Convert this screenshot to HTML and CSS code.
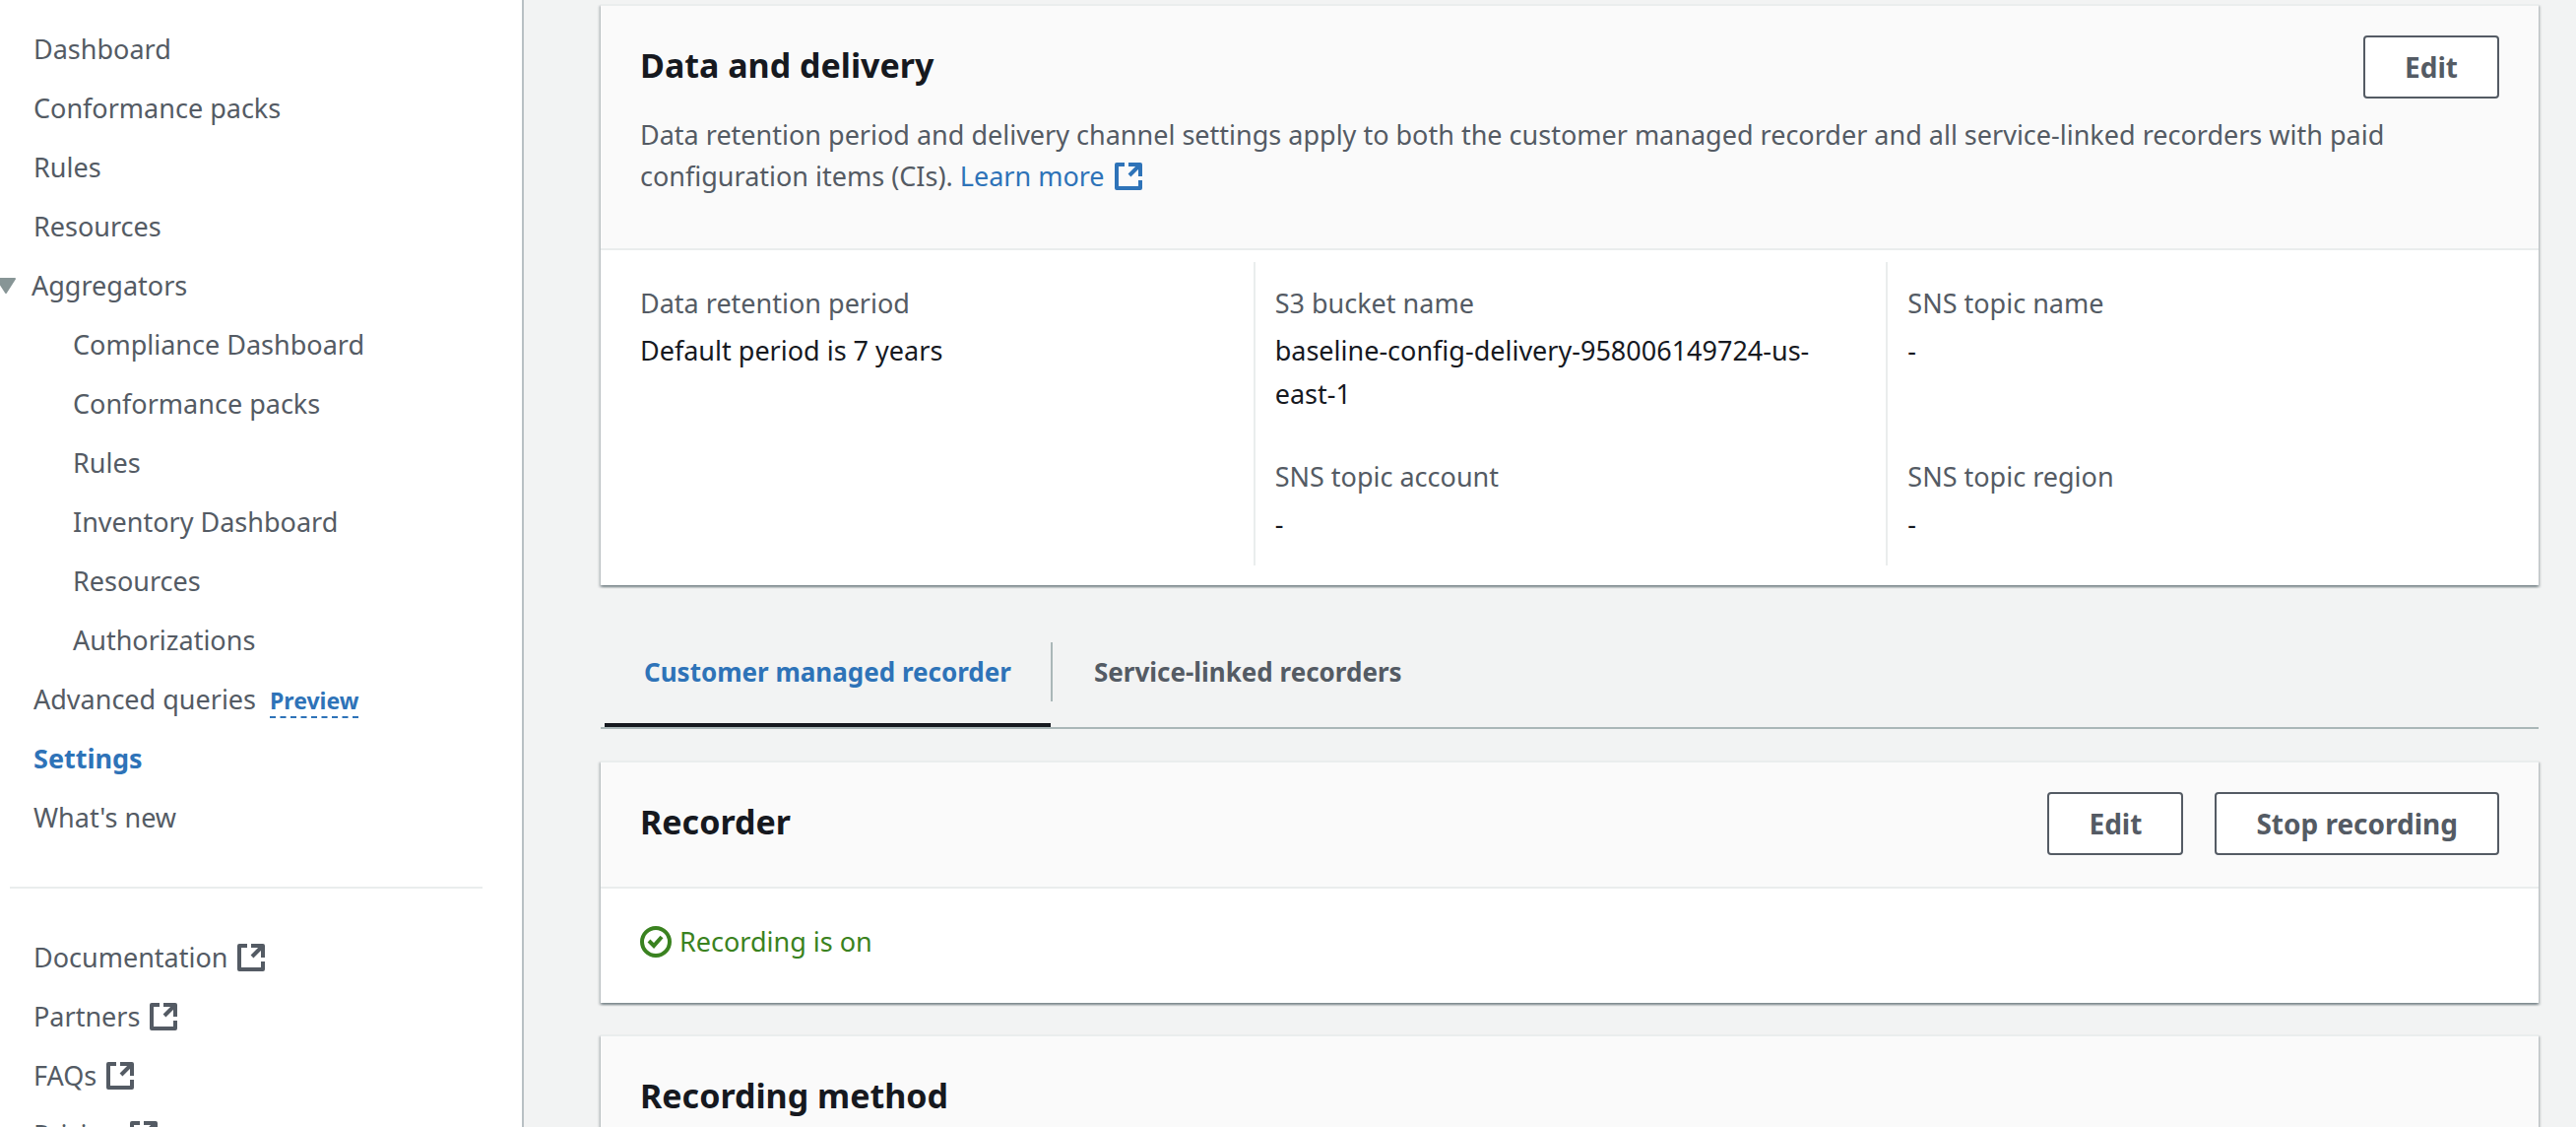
FILE: index.html
```html
<!DOCTYPE html>
<html lang="en">
<head>
<meta charset="utf-8">
<title>AWS Config - Settings</title>
<link rel="stylesheet" href="styles.css">
</head>
<body>
<svg class="sprite" aria-hidden="true">
  <symbol id="external" viewBox="0 0 32 32">
    <path d="M12 4H4v24h24v-8M16 4h12v12M28 4L17 15" fill="none" stroke="currentColor" stroke-width="4" stroke-linejoin="round"/>
  </symbol>
</svg>
<div class="layout">
  <nav class="sidebar" aria-label="AWS Config">
    <ul class="nav">
      <li><a href="#">Dashboard</a></li>
      <li><a href="#">Conformance packs</a></li>
      <li><a href="#">Rules</a></li>
      <li><a href="#">Resources</a></li>
      <li class="group">
        <button class="toggle" type="button" aria-expanded="true" aria-label="Collapse Aggregators"><svg viewBox="0 0 24 20"><path d="M3 3h18l-9 14z" fill="currentColor" stroke="currentColor" stroke-width="2" stroke-linejoin="round"/></svg></button>
        <a href="#">Aggregators</a>
      </li>
      <li>
        <ul class="nav nested">
          <li><a href="#">Compliance Dashboard</a></li>
          <li><a href="#">Conformance packs</a></li>
          <li><a href="#">Rules</a></li>
          <li><a href="#">Inventory Dashboard</a></li>
          <li><a href="#">Resources</a></li>
          <li><a href="#">Authorizations</a></li>
        </ul>
      </li>
      <li><a href="#">Advanced queries</a><button class="preview" type="button">Preview</button></li>
      <li><a class="current" href="#" aria-current="page">Settings</a></li>
      <li><a href="#">What's new</a></li>
    </ul>
    <hr class="rule">
    <ul class="nav">
      <li><a href="#">Documentation<svg class="ext"><use href="#external"/></svg></a></li>
      <li><a href="#">Partners<svg class="ext"><use href="#external"/></svg></a></li>
      <li><a href="#">FAQs<svg class="ext"><use href="#external"/></svg></a></li>
      <li><a href="#">Pricing<svg class="ext"><use href="#external"/></svg></a></li>
    </ul>
  </nav>
  <main class="content">
    <section class="card">
      <header class="card-header described">
        <div class="card-title">
          <h2>Data and delivery</h2>
          <button class="btn" type="button">Edit</button>
        </div>
        <p>Data retention period and delivery channel settings apply to both the customer managed recorder and all service-linked recorders with paid configuration items (CIs). <a href="#">Learn more<svg class="ext"><use href="#external"/></svg></a></p>
      </header>
      <div class="columns">
        <dl>
          <div class="cell"><dt>Data retention period</dt><dd>Default period is 7 years</dd></div>
        </dl>
        <dl class="wide">
          <div class="cell"><dt>S3 bucket name</dt><dd>baseline-config-delivery-958006149724-us-east-1</dd></div>
          <div class="cell"><dt>SNS topic name</dt><dd>-</dd></div>
          <div class="cell"><dt>SNS topic account</dt><dd>-</dd></div>
          <div class="cell"><dt>SNS topic region</dt><dd>-</dd></div>
        </dl>
      </div>
    </section>
    <div class="tabs" role="tablist">
      <button class="tab active" type="button" role="tab" aria-selected="true">Customer managed recorder</button>
      <button class="tab" type="button" role="tab" aria-selected="false">Service-linked recorders</button>
    </div>
    <section class="card">
      <header class="card-header">
        <div class="card-title">
          <h2>Recorder</h2>
          <button class="btn" type="button">Edit</button>
          <button class="btn" type="button">Stop recording</button>
        </div>
      </header>
      <div class="card-body">
        <p class="status"><svg viewBox="0 0 32 32"><circle cx="16" cy="16" r="14" fill="none" stroke="currentColor" stroke-width="4"/><path d="M9 15l5 5 8-9" fill="none" stroke="currentColor" stroke-width="4"/></svg>Recording is on</p>
      </div>
    </section>
    <section class="card">
      <header class="card-header">
        <div class="card-title">
          <h2>Recording method</h2>
        </div>
      </header>
    </section>
  </main>
</div>
</body>
</html>
```
FILE: styles.css
```css
* {
  box-sizing: border-box;
}

html {
  scrollbar-width: none;
}

body {
  margin: 0;
  background: #f2f3f3;
  color: #16191f;
  font: 27px/44px "Noto Sans", "Open Sans", sans-serif;
}

ul, dl, dd, p, h2 {
  margin: 0;
  padding: 0;
}

ul {
  list-style: none;
}

a {
  color: inherit;
  text-decoration: none;
}

button {
  font: inherit;
  color: inherit;
  background: none;
  border: 0;
  padding: 0;
}

.sprite {
  display: none;
}

.layout {
  display: flex;
  min-height: 100vh;
}

.sidebar {
  flex: 0 0 532px;
  padding-top: 20px;
  background: #fff;
  border-right: 2px solid #b8c0c4;
  color: #545b64;
}

.nav {
  padding-left: 34px;
}

.nav li {
  line-height: 60px;
}

.nav .nested {
  padding-left: 40px;
}

.group {
  display: flex;
  margin-left: -40px;
}

.toggle {
  display: flex;
  align-items: center;
  width: 38px;
  color: #879596;
}

.toggle svg {
  width: 24px;
  height: 20px;
}

.preview {
  margin-left: 14px;
  border-bottom: 2px dashed #2e73b8;
  color: #2e73b8;
  font-size: 23px;
  font-weight: 700;
  line-height: 32px;
}

.nav .current {
  color: #2e73b8;
  font-weight: 700;
}

.rule {
  height: 2px;
  margin: 40px 40px 40px 10px;
  border: 0;
  background: #eaeded;
}

.ext {
  width: 32px;
  height: 32px;
  margin-left: 8px;
  vertical-align: -6px;
}

.content {
  flex: 1;
  min-width: 0;
  padding: 4px 38px 0 78px;
}

.card {
  margin-bottom: 32px;
  background: #fff;
  border-top: 2px solid #eaeded;
  box-shadow: 0 2px 2px rgba(0, 28, 36, .3), 2px 2px 2px rgba(0, 28, 36, .15), -2px 2px 2px rgba(0, 28, 36, .15);
}

.card-header {
  padding: 30px 40px 32px;
  background: #fafafa;
  border-bottom: 2px solid #eaeded;
}

.described {
  padding-bottom: 52px;
}

.card-title {
  display: flex;
  gap: 32px;
  align-items: flex-start;
}

h2 {
  flex: 1;
  font-size: 34px;
  line-height: 60px;
}

.btn {
  height: 64px;
  padding: 0 40px;
  background: #fff;
  border: 2px solid #545b64;
  border-radius: 4px;
  color: #545b64;
  font-size: 28px;
  font-weight: 700;
}

.card-header p {
  margin-top: 16px;
  color: #545b64;
  line-height: 42px;
}

.card-header a {
  color: #2e73b8;
}

.columns {
  display: grid;
  grid-template-columns: 1fr 2fr;
  padding: 12px 20px 20px;
}

.wide {
  display: grid;
  grid-template-columns: 1fr 1fr;
}

.cell {
  padding: 20px;
}

.wide .cell {
  border-left: 2px solid #eaeded;
}

dt {
  margin-bottom: 4px;
  color: #545b64;
}

.tabs {
  display: flex;
  margin-bottom: 32px;
  padding: 26px 0 0 4px;
  border-bottom: 2px solid #aab7b8;
}

.tab {
  padding: 0 40px 22px;
  border-bottom: 4px solid transparent;
  color: #545b64;
  font-size: 26px;
  font-weight: 700;
  line-height: 60px;
}

.tab + .tab {
  padding-left: 44px;
  background: linear-gradient(#aab7b8, #aab7b8) left top / 2px 60px no-repeat;
}

.active {
  border-bottom-color: #16191f;
  color: #2e73b8;
}

.card-body {
  padding: 32px 40px 40px;
}

.status {
  display: flex;
  gap: 8px;
  align-items: center;
  color: #3a8220;
}

.status svg {
  width: 32px;
  height: 32px;
}
```
